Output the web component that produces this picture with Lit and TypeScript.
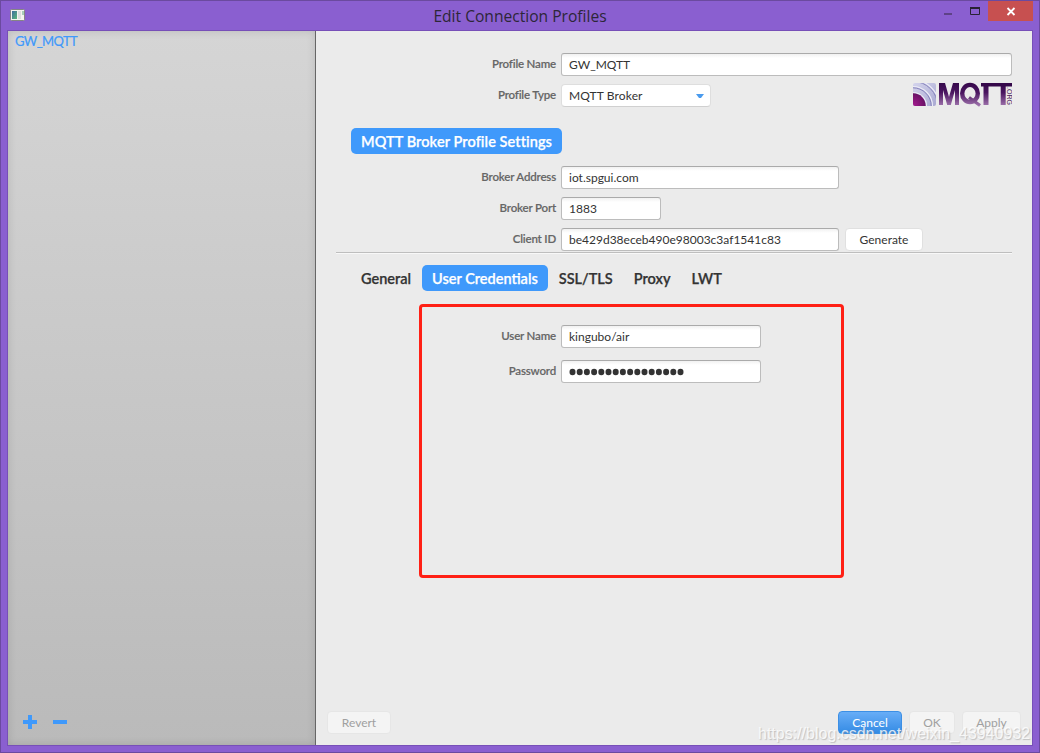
import { LitElement, html, css, svg } from "lit";
import { customElement, property } from "lit/decorators.js";

@customElement("mqtt-logo")
class MqttLogo extends LitElement {
  static styles = css`
    :host { display: block; width: 100px; height: 27px; }
    svg { display: block; }
    .org { font: 400 7.500px "Liberation Sans", Arial, sans-serif; }
  `;
  render() {
    return html`<svg width="100" height="27" viewBox="0 0 100 27">
      <defs>
        <linearGradient id="ink" gradientUnits="userSpaceOnUse" x1="0" y1="2" x2="0" y2="26">
          <stop offset="0" stop-color="#35084a" />
          <stop offset=".4" stop-color="#4a1560" />
          <stop offset="1" stop-color="#a77cb4" />
        </linearGradient>
        <linearGradient id="sky" x1="0" y1="0" x2="1" y2="1">
          <stop offset="0" stop-color="#d4d4ec" />
          <stop offset="1" stop-color="#a9a9d2" />
        </linearGradient>
        <radialGradient id="core" gradientUnits="userSpaceOnUse" cx="2" cy="24" r="13">
          <stop offset="0" stop-color="#a01a8c" />
          <stop offset="1" stop-color="#631060" />
        </radialGradient>
        <clipPath id="tile"><rect x="1" y="2" width="23" height="23" rx="2" /></clipPath>
      </defs>
      <g clip-path="url(#tile)">
        <rect x="1" y="2" width="23" height="23" fill="url(#sky)" />
        <g fill="none" stroke="#ececf7" stroke-width="1.200">
          <circle cx="1" cy="25" r="13.5" />
          <circle cx="1" cy="25" r="19.5" />
          <circle cx="1" cy="25" r="26" />
        </g>
        <g fill="none" stroke="#8784bc" stroke-width="1">
          <circle cx="1" cy="25" r="18.2" />
          <circle cx="1" cy="25" r="24.6" />
        </g>
        <circle cx="1" cy="25" r="12.7" fill="url(#core)" />
      </g>
      <g fill="url(#ink)">
        <path d="M27 24V2H33L37 16L41 2H47V24H43V9L38.800 24H35.200L31 9V24Z" />
        <path d="M71.500 24V2H76.500V24ZM88.700 24V2H93.700V24Z" />
      </g>
      <ellipse cx="58" cy="12.500" rx="7.800" ry="8.600" fill="none" stroke="url(#ink)" stroke-width="4.400" />
      <path d="M57 16.500L68 24.500" fill="none" stroke="url(#ink)" stroke-width="3.200" />
      <path d="M69 2H100V5.500H69Z" fill="#35084a" />
      <text class="org" transform="translate(94.500 6) rotate(90)" fill="#4a1c5c" textLength="18" lengthAdjust="spacingAndGlyphs">.ORG</text>
    </svg>`;
  }
}

@customElement("form-row")
class FormRow extends LitElement {
  @property() label = "";
  @property() value = "";
  @property() kind = "text";
  @property({ type: Number }) size = 200;
  @property({ type: Number }) labelWidth = 240;
  static styles = css`
    :host { display: flex; align-items: center; gap: 5px; height: 23px; }
    .label { text-align: right; color: #666; font-size: 11.5px; letter-spacing: -.18px; font-weight: 600; -webkit-text-stroke: .15px; line-height: 20px; margin-top: -2px; white-space: nowrap; flex: none; }
    .field { box-sizing: border-box; height: 23px; border: 1px solid #bcbcbc; border-top-color: #aaa; border-radius: 3px; background: linear-gradient(#f1f1f1, #fff 4px); padding: 0 7px; color: #333; font-size: 12px; line-height: 22px; white-space: nowrap; }
    .select { border-color: #dedede; border-bottom-color: #d0d0d0; background: #fff; display: flex; align-items: center; justify-content: space-between; border-radius: 4px; padding-right: 6px; letter-spacing: .12px; }
    .dots { display: block; margin-top: 7px; }
  `;
  render() {
    const content = this.kind === "password"
      ? html`<svg class="dots" width="120" height="8" fill="#333">${Array.from({ length: 16 }, (_, i) => svg`<ellipse cx=${3.5 + i * 7.2} cy="4" rx="3" ry="3.200" />`)}</svg>`
      : this.value;
    return html`<span class="label" style="width:${this.labelWidth}px">${this.label}</span>
      <div class="field ${this.kind}" style="width:${this.size}px">${this.kind === "select"
        ? html`<span>${content}</span><svg width="8" height="4"><path d="M0 0H8L5 4H3Z" fill="#4a9bee" /></svg>`
        : content}</div><slot></slot>`;
  }
}

@customElement("app-root")
class AppRoot extends LitElement {
  static styles = css`
    :host { display: block; width: 1040px; height: 753px; overflow: hidden; position: relative; font-family: Lato, sans-serif; }
    .window { box-sizing: border-box; width: 1040px; height: 753px; background: #8a5fd0; border: 1px solid #6b4a9f; padding: 0 6px 6px; display: flex; flex-direction: column; }
    .title { height: 29px; flex: none; display: grid; grid-template-columns: 200px 1fr 200px; }
    .icon { margin: 8px 0 0 3px; }
    .name { text-align: center; font: 15.600px/30px "Open Sans", sans-serif; color: #2d2638; }
    .controls { display: flex; justify-content: flex-end; margin-right: -3px; }
    .controls svg { display: block; }
    .body { flex: 1; display: flex; border: 1px solid #774fb8; min-height: 0; }
    .side { width: 307px; flex: none; background: linear-gradient(#d5d5d5, #bababa); box-shadow: inset 0 0 8px #0002; border-right: 1px solid #666; display: flex; flex-direction: column; justify-content: space-between; color: #3f99fb; }
    .profile { padding: 0 7px; font-size: 13px; letter-spacing: -.6px; -webkit-text-stroke: .2px; line-height: 20px; }
    .tools { display: flex; gap: 15px; padding: 0 15px 16px; }
    .main { flex: 1; background: #ebebeb; display: flex; flex-direction: column; min-width: 0; }
    .first { margin-top: 22px; }
    .typeline { display: flex; justify-content: space-between; margin-top: 8px; padding-right: 20px; height: 23px; }
    .logo { margin-top: -3px; }
    .heading { align-self: flex-start; margin: 21px 0 12px 35px; letter-spacing: .08px; }
    .pill { box-sizing: border-box; height: 26px; border-radius: 5px; background: #3f99fb; color: #fff; }
    .big { font-size: 14.500px; font-weight: 600; -webkit-text-stroke: .25px; line-height: 27px; white-space: nowrap; padding: 0 10px; }
    .stack { display: flex; flex-direction: column; gap: 8px; }
    .btn { box-sizing: border-box; height: 23px; border-radius: 4px; border: 1px solid #e0e0e0; background: #fff; color: #333; font-size: 12px; line-height: 22px; text-align: center; }
    .gen { width: 78px; margin-left: 1px; }
    .line { margin: 1px 20px 0; height: 1px; background: #bebebe; border-bottom: 1px solid #f8f8f8; flex: none; }
    .tabs { display: flex; gap: 1px; margin: 11px 0 13px 35px; color: #333; }
    .tab { height: 26px; box-sizing: border-box; }
    .box { box-sizing: border-box; width: 425px; height: 274px; margin-left: 103px; border: 3px solid #ff2015; border-radius: 4px; padding-top: 18px; display: flex; flex-direction: column; gap: 12px; }
    .footer { margin: auto 11px 11px 11px; display: flex; gap: 7px; align-items: center; }
    .off { background: #f4f4f4; border-color: #e6e6e6; color: #a0a0a0; }
    .revert { width: 64px; margin-right: auto; }
    .cancel { width: 64px; background: linear-gradient(#68adf7, #348be4); border-color: #3c8fe5; color: #fff; }
    .ok { width: 46px; }
    .apply { width: 59px; }
    .mark { position: absolute; left: 758px; top: 724px; font: 16px/20px "Liberation Sans", Arial, sans-serif; color: #fffc; text-shadow: 1px 1px 1px #9998; white-space: nowrap; }
  `;
  render() {
    return html`<div class="window">
      <div class="title">
        <svg class="icon" width="16" height="14"><defs><linearGradient id="g" x2="1" y2="1"><stop stop-color="#3f6da0" /><stop offset="1" stop-color="#5bb878" /></linearGradient></defs><rect x=".5" y=".5" width="14" height="11" rx="1" fill="#f4f4f0" stroke="#858585" /><rect x="2" y="2" width="5" height="8" fill="url(#g)" /><rect x="8" y="2" width="3" height="8" fill="#ddd" /><rect x="12" y="2" width="2" height="4" fill="#a7cdb9" /></svg>
        <div class="name">Edit Connection Profiles</div>
        <div class="controls"><svg width="96" height="21"><rect x="4" y="12" width="8" height="2" fill="#5e4287" /><path d="M30.500 7V13.500H39.500V7" fill="none" stroke="#292233" /><path d="M30 7H40" stroke="#292233" stroke-width="2" /><rect x="48" width="45" height="20" fill="#c75050" /><path d="M67.500 7L74.500 14M74.500 7L67.500 14" stroke="#fff" stroke-width="1.800" /></svg></div>
      </div>
      <div class="body">
        <div class="side">
          <div class="profile">GW_MQTT</div>
          <div class="tools"><svg width="14" height="14"><path d="M5 0H9V5H14V9H9V14H5V9H0V5H5Z" fill="#3f99fb" /></svg><svg width="15" height="14"><path d="M1 5H15V9H1Z" fill="#3f99fb" /></svg></div>
        </div>
        <div class="main">
          <form-row class="first" label="Profile Name" value="GW_MQTT" size="451"></form-row>
          <div class="typeline">
            <form-row label="Profile Type" value="MQTT Broker" kind="select" size="150"></form-row>
            <mqtt-logo class="logo"></mqtt-logo>
          </div>
          <div class="heading pill big">MQTT Broker Profile Settings</div>
          <div class="stack">
            <form-row label="Broker Address" value="iot.spgui.com" size="278"></form-row>
            <form-row label="Broker Port" value="1883" size="100"></form-row>
            <form-row label="Client ID" value="be429d38eceb490e98003c3af1541c83" size="278"><div class="btn gen">Generate</div></form-row>
          </div>
          <div class="line"></div>
          <div class="tabs">
            <span class="tab big">General</span><span class="tab big pill">User Credentials</span><span class="tab big">SSL/TLS</span><span class="tab big">Proxy</span><span class="tab big">LWT</span>
          </div>
          <div class="box">
            <form-row label="User Name" value="kingubo/air" labelWidth="134"></form-row>
            <form-row label="Password" kind="password" labelWidth="134"></form-row>
          </div>
          <div class="footer">
            <div class="btn off revert">Revert</div><div class="btn cancel">Cancel</div><div class="btn off ok">OK</div><div class="btn off apply">Apply</div>
          </div>
        </div>
      </div>
    </div>
    <div class="mark">https://blog.csdn.net/weixin_43940932</div>`;
  }
}
